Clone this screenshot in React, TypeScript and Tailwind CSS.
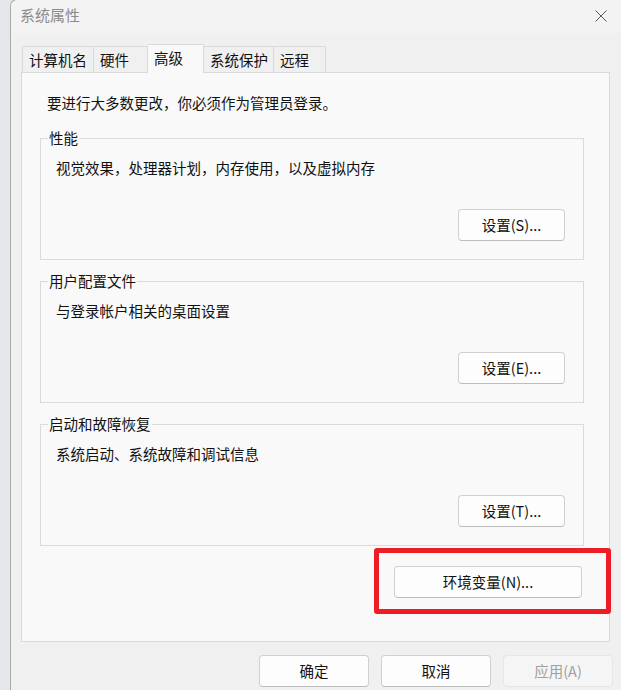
const FONT = "font-['Segoe_UI','Noto_Sans_CJK_SC',sans-serif]"

function WinButton({ label, className = "" }: { label: string; className?: string }) {
  return (
    <button
      className={`h-[32px] rounded-[4px] border border-[#d0d0d0] border-b-[#bdbdbd] bg-[#fdfdfd] text-[14.5px] leading-[20px] text-[#111111] ${className}`}
    >
      {label}
    </button>
  )
}

function GroupBox({ title, desc, button }: { title: string; desc: string; button: string }) {
  return (
    <div className="relative ml-[18px] mr-[25px] border border-[#dadada] pl-[15px] pr-[18px] pt-[19px] pb-[18px]">
      <span className="absolute -top-[11px] left-[7px] bg-[#f9f9f9] px-[1px] text-[14.5px] leading-[20px] text-[#111111]">
        {title}
      </span>
      <div className="text-[14.5px] leading-[20px] text-[#111111]">{desc}</div>
      <div className="mt-[31px] flex justify-end">
        <WinButton label={button} className="w-[107px]" />
      </div>
    </div>
  )
}

const tabs = [
  { name: "计算机名", w: "w-[72px]" },
  { name: "硬件", w: "w-[54px]" },
  { name: "高级", w: "w-[56px]", active: true },
  { name: "系统保护", w: "w-[70px]" },
  { name: "远程", w: "w-[52px]" },
]

export default function App() {
  return (
    <div className={`relative flex h-[690px] w-[621px] overflow-hidden bg-gradient-to-r from-[#e6e7ea] to-[#dcdee2] ${FONT}`}>
      <div className="w-[10px] shrink-0" />
      {/* window */}
      <div className="flex min-w-0 flex-1 flex-col rounded-tl-[7px] border-l border-t border-[#a9a9a9] bg-[#f0f0f0] -mt-px">
        {/* title bar */}
        <div className="flex h-[33px] shrink-0 items-center justify-between rounded-tl-[7px] bg-[#f3f3f3] pb-[3px] pl-[9px] pr-[14px]">
          <span className="text-[15px] leading-[20px] text-[#8b8b8b]">系统属性</span>
          <svg width="12" height="12" viewBox="0 0 12 12" className="mt-[1px]">
            <path d="M0.5 0.5 L11.5 11.5 M11.5 0.5 L0.5 11.5" stroke="#5a5a5a" strokeWidth="1" fill="none" />
          </svg>
        </div>

        {/* body */}
        <div className="flex flex-1 flex-col pt-[11px]">
          {/* tabs */}
          <div className="relative z-10 ml-[11px] flex items-end">
            {tabs.map((t, i) => (
              <div
                key={t.name}
                className={`${t.w} border-t border-r border-[#dadada] pl-[6px] text-left text-[14.5px] text-[#111111] ${
                  i === 0 ? "border-l" : ""
                } ${
                  t.active
                    ? "-mb-px h-[29px] bg-[#f9f9f9] pt-[3px] leading-[20px]"
                    : "h-[26px] bg-[#f0f0f0] pt-[3px] leading-[20px]"
                }`}
              >
                {t.name}
              </div>
            ))}
          </div>

          {/* panel */}
          <div className="ml-[10px] mr-[11px] flex flex-col border border-[#dadada] bg-[#f9f9f9] pt-[20px] pb-[43px]">
            <div className="pl-[25px] text-[14.5px] leading-[20px] text-[#111111]">
              要进行大多数更改，你必须作为管理员登录。
            </div>
            <div className="mt-[25px] flex flex-col gap-[21px]">
              <GroupBox title="性能" desc="视觉效果，处理器计划，内存使用，以及虚拟内存" button="设置(S)..." />
              <GroupBox title="用户配置文件" desc="与登录帐户相关的桌面设置" button="设置(E)..." />
              <GroupBox title="启动和故障恢复" desc="系统启动、系统故障和调试信息" button="设置(T)..." />
            </div>
            <div className="mt-[20px] flex justify-end pr-[27px]">
              <WinButton label="环境变量(N)..." className="w-[188px]" />
            </div>
          </div>

          {/* dialog buttons */}
          <div className="mt-[13px] flex justify-end gap-[12px] pr-[8px]">
            <WinButton label="确定" className="w-[110px]" />
            <WinButton label="取消" className="w-[110px]" />
            <button className="h-[32px] w-[110px] rounded-[4px] border border-[#e6e6e6] bg-[#f5f5f5] text-[14.5px] leading-[20px] text-[#a0a0a0]">
              应用(A)
            </button>
          </div>
        </div>
      </div>

      {/* red highlight annotation */}
      <div className="pointer-events-none absolute left-[374px] top-[548px] h-[66px] w-[237px] rounded-[3px] border-[5px] border-[#ee1c25]" />
    </div>
  )
}
